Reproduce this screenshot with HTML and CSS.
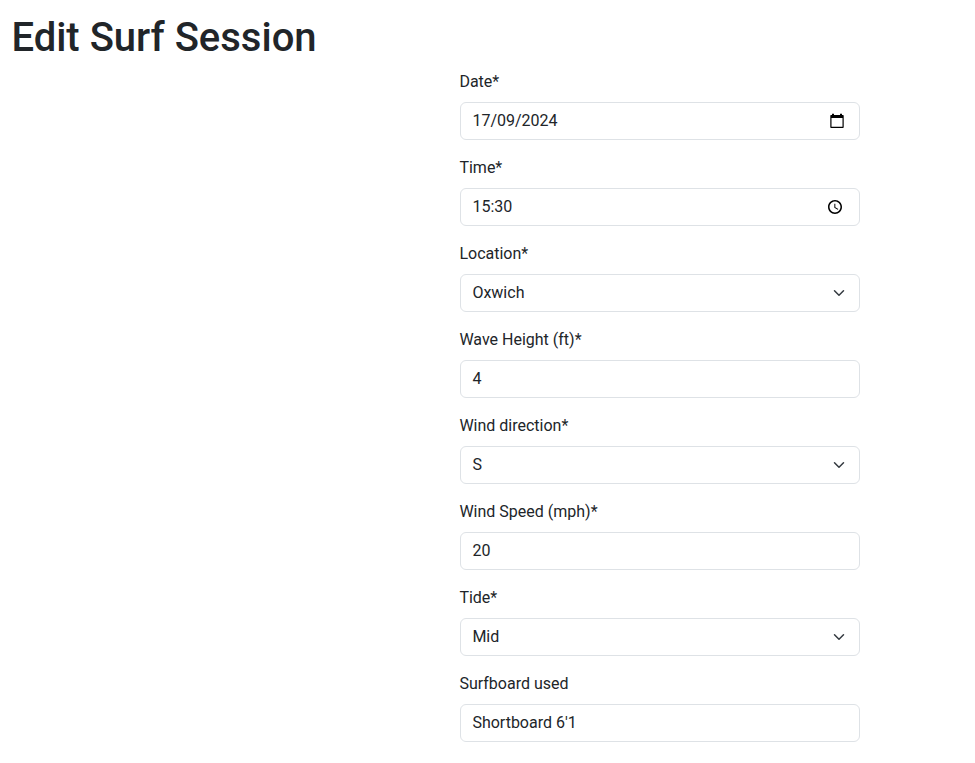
FILE: index.html
```html
<!DOCTYPE html>
<html lang="en">
<head>
<meta charset="utf-8">
<title>Edit Surf Session</title>
<link rel="stylesheet" href="styles.css">
</head>
<body>
<main class="container">
  <h1 class="title">Edit Surf Session</h1>
  <form class="session-form">
    <div class="field"><div class="label">Date*</div>
      <div class="control"><span>17/09/2024</span>
        <svg class="icon-date" viewBox="0 0 16 16"><path fill-rule="evenodd" d="M2 2h1V.7h2V2h6V.7h2V2h1q.7 0 .7.700V14q0 1-.7 1H2q-.7 0-.7-1V2.700Q1.300 2 2 2zm.500 3v8.700h11V5z"/></svg></div></div>
    <div class="field"><div class="label">Time*</div>
      <div class="control"><span>15:30</span>
        <svg class="icon-time" viewBox="0 0 24 24"><path d="M12 1.500C6.200 1.500 1.500 6.200 1.500 12S6.200 22.500 12 22.500 22.500 17.800 22.500 12 17.800 1.500 12 1.500zm0 18.700c-4.500 0-8.200-3.700-8.200-8.200S7.500 3.800 12 3.800s8.200 3.700 8.200 8.200-3.700 8.200-8.200 8.200zm.5-13.200H11v6l5.200 3.200.8-1.300-4.500-2.700V7z"/></svg></div></div>
    <div class="field"><div class="label">Location*</div>
      <div class="control"><span>Oxwich</span>
        <svg class="icon-chevron" viewBox="0 0 16 16"><path d="m2 5 6 6 6-6"/></svg></div></div>
    <div class="field"><div class="label">Wave Height (ft)*</div>
      <div class="control"><span>4</span></div></div>
    <div class="field"><div class="label">Wind direction*</div>
      <div class="control"><span>S</span>
        <svg class="icon-chevron" viewBox="0 0 16 16"><path d="m2 5 6 6 6-6"/></svg></div></div>
    <div class="field"><div class="label">Wind Speed (mph)*</div>
      <div class="control"><span>20</span></div></div>
    <div class="field"><div class="label">Tide*</div>
      <div class="control"><span>Mid</span>
        <svg class="icon-chevron" viewBox="0 0 16 16"><path d="m2 5 6 6 6-6"/></svg></div></div>
    <div class="field"><div class="label">Surfboard used</div>
      <div class="control"><span>Shortboard 6'1</span></div></div>
  </form>
</main>
</body>
</html>
```
FILE: styles.css
```css
* { box-sizing: border-box; }
body {
  margin: 0;
  background: #fff;
  color: #212529;
  font: 400 16px/24px Roboto, sans-serif;
}
.container { padding: 14px 12px 0; }
.title {
  margin: 0 0 8px -0.6px;
  font-size: 40px;
  line-height: 48px;
  font-weight: 500;
}
.session-form { width: 400px; margin-left: 448px; }
.field { margin-bottom: 16px; }
.label { margin: 0 0 8px -0.6px; }
.control {
  display: flex;
  align-items: center;
  justify-content: space-between;
  height: 38px;
  padding: 0 12px 0 11.4px;
  border: 1px solid #dee2e6;
  border-radius: 6px;
}
.icon-date { width: 16px; height: 16px; margin-right: 2px; fill: #000; }
.icon-time { width: 16px; height: 16px; margin-right: 4px; fill: #000; }
.icon-chevron {
  width: 16px;
  height: 12px;
  fill: none;
  stroke: #343a40;
  stroke-width: 2;
  stroke-linecap: round;
  stroke-linejoin: round;
}
```
